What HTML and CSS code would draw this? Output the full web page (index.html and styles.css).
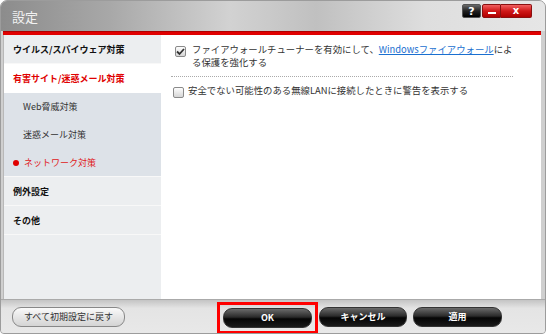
FILE: index.html
```html
<!DOCTYPE html>
<html lang="ja">
<head>
  <meta charset="UTF-8" />
  <title>設定</title>
  <link rel="stylesheet" href="styles.css">
</head>
<body>
  <div class="window">
    <div class="titlebar">
      <span class="title">設定</span>
      <div class="winbtns">
        <span class="wb help">?</span>
        <span class="wb min"><i></i></span>
        <span class="wb close">x</span>
      </div>
    </div>
    <div class="redbar"></div>
    <div class="body">
      <ul class="nav">
        <li class="item">ウイルス/スパイウェア対策</li>
        <li class="item active">有害サイト/迷惑メール対策</li>
        <li class="sub">Web脅威対策</li>
        <li class="sub">迷惑メール対策</li>
        <li class="sub current"><span class="dot"></span>ネットワーク対策</li>
        <li class="item">例外設定</li>
        <li class="item">その他</li>
      </ul>
      <div class="main">
        <div class="opt">
          <span class="cb checked">
            <svg width="9" height="9" viewBox="0 0 9 9"><path d="M1 4.5 L3.5 7 L8 2" fill="none" stroke="#333" stroke-width="1.8"/></svg>
          </span>
          <p>ファイアウォールチューナーを有効にして、<a href="#">Windowsファイアウォール</a>によ<br>る保護を強化する</p>
        </div>
        <hr class="sep">
        <div class="opt">
          <span class="cb"></span>
          <p>安全でない可能性のある無線LANに接続したときに警告を表示する</p>
        </div>
      </div>
    </div>
    <div class="footer">
      <button class="btn light">すべて初期設定に戻す</button>
      <div class="mark"><button class="btn dark ok">OK</button></div>
      <button class="btn dark cancel">キャンセル</button>
      <button class="btn dark apply">適用</button>
    </div>
  </div>
</body>
</html>
```

FILE: styles.css
```css
* {
  box-sizing: border-box;
}
body {
  margin: 0;
  background: #fff;
  font-family: "Noto Sans CJK JP", "Noto Sans", sans-serif;
  font-size: 9px;
  color: #222;
}
.window {
  width: 546px;
  height: 334px;
  background: #cfcfcf;
  border: 1px solid #9c9c9c;
  border-radius: 7px 7px 4px 4px;
  padding: 0 4px 0 2px;
  display: flex;
  flex-direction: column;
  overflow: hidden;
}
.titlebar {
  height: 30px;
  margin: 0 -4px 0 -2px;
  padding: 0 13px 0 11px;
  display: flex;
  justify-content: space-between;
  background: linear-gradient(to right, #8c8c8c, #a8a8a8 20%, #d2d2d2 42%, #c0c0c0 58%, #dedede 78%, #e6e6e6);
}
.title {
  color: #f2f2f2;
  font-size: 13px;
  line-height: 32px;
}
.winbtns {
  display: flex;
  padding-top: 3px;
  height: 17px;
  box-sizing: content-box;
}
.wb {
  height: 14px;
  color: #fff;
  font-family: "DejaVu Sans", sans-serif;
  font-weight: bold;
  font-size: 11px;
  line-height: 13px;
  text-align: center;
  border: 1px solid #555;
}
.help {
  width: 19px;
  margin-right: 1px;
  border-radius: 2px;
  background: linear-gradient(#6a6a6a, #222 50%, #000);
}
.min, .close {
  background: linear-gradient(#f06060, #d01818 50%, #b00000);
  border-color: #8a1010;
}
.min {
  width: 19px;
  border-radius: 2px 0 0 2px;
  display: flex;
  align-items: center;
  justify-content: center;
}
.min i {
  width: 8px;
  height: 2px;
  margin-top: 3px;
  background: #fff;
}
.close {
  width: 31px;
  border-left: none;
  border-radius: 0 2px 2px 0;
  font-size: 10px;
  line-height: 11px;
}
.redbar {
  height: 4px;
  background: #e00000;
  border-top: 1px solid #b00000;
}
.body {
  flex: 1;
  display: flex;
}
.nav {
  list-style: none;
  margin: 0;
  padding: 0;
  width: 158px;
  background: #eceef0;
  border-left: 1px solid #b8b8b8;
}
.nav li {
  height: 29px;
  line-height: 29px;
  border-bottom: 1px solid #f8f8f8;
}
.item {
  padding-left: 9px;
  font-weight: bold;
  color: #111;
  background: #eceef0;
}
.nav .item.active {
  background: #fff;
  color: #e00000;
  border-bottom-color: #fff;
}
.nav .sub {
  height: 28px;
  line-height: 28px;
  padding-left: 19px;
  background: #dde2e8;
  color: #333;
  border-bottom: none;
}
.nav .current {
  padding-left: 9px;
  color: #e02020;
  border-bottom: 1px solid #f8f8f8;
}
.dot {
  display: inline-block;
  width: 6px;
  height: 6px;
  margin-right: 5px;
  border-radius: 50%;
  background: #e00000;
}
.main {
  flex: 1;
  background: #fff;
  padding: 11px 0 0 14px;
}
.opt {
  display: flex;
  align-items: flex-start;
  gap: 6px;
}
.opt p {
  margin: -3px 0 0;
  font-size: 9.4px;
  line-height: 12.5px;
  color: #333;
}
.opt a {
  color: #1a6fd0;
}
.cb {
  width: 11px;
  height: 11px;
  flex: none;
  border: 1px solid #8a8a8a;
  border-radius: 2px;
  background: linear-gradient(#fdfdfd, #d6d6d6);
  display: flex;
  align-items: center;
  justify-content: center;
}
.opt + .sep + .opt .cb {
  margin-left: -2px;
  margin-right: -2px;
}
.sep {
  border: none;
  border-top: 1px dotted #aaa;
  width: 342px;
  margin: 8px 0 10px -4px;
}
.footer {
  height: 34px;
  margin: 0 -4px 0 -2px;
  padding: 0 43px 0 11px;
  display: flex;
  align-items: center;
  background: linear-gradient(#c4c4c4, #e4e4e4 25%, #e8e8e8);
  border-top: 1px solid #aaa;
}
.btn {
  height: 20px;
  padding: 0;
  font-family: inherit;
  font-size: 9px;
  font-weight: bold;
  border-radius: 9px;
}
.light {
  width: 113px;
  color: #333;
  font-weight: normal;
  border: 1px solid #888;
  background: linear-gradient(#fafafa, #e6e6e6 50%, #d4d4d4);
}
.dark {
  color: #fff;
  border: 1px solid #333;
  background: linear-gradient(#6a6a6a, #2a2a2a 45%, #050505 55%, #1a1a1a);
}
.mark {
  margin-left: auto;
  padding: 3px;
  border: 3px solid #ff0000;
  margin-top: 2px;
}
.ok {
  width: 89px;
  display: block;
}
.cancel {
  width: 88px;
  margin-left: 1px;
}
.apply {
  width: 89px;
  margin-left: 6px;
}
```
